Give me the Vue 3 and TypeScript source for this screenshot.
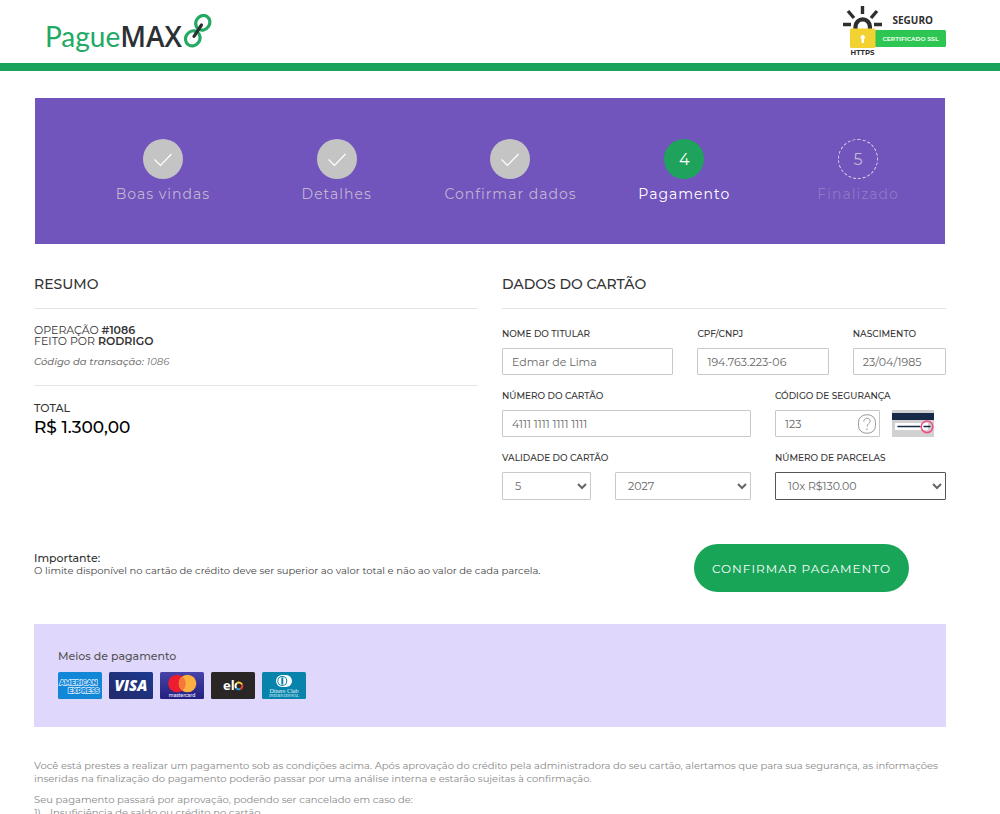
<script setup lang="ts">
import { ref } from 'vue'

type StepState = 'done' | 'active' | 'pending'
interface Step {
  label: string
  state: StepState
}

const steps: Step[] = [
  { label: 'Boas vindas', state: 'done' },
  { label: 'Detalhes', state: 'done' },
  { label: 'Confirmar dados', state: 'done' },
  { label: 'Pagamento', state: 'active' },
  { label: 'Finalizado', state: 'pending' },
]

const holder = ref('Edmar de Lima')
const document = ref('194.763.223-06')
const birth = ref('23/04/1985')
const cardNumber = ref('4111 1111 1111 1111')
const cvv = ref('123')
const month = ref('5')
const year = ref('2027')
const installments = ref('10x R$130.00')
</script>

<template>
  <div class="page">
    <header class="topbar">
      <a class="brand" href="#" aria-label="PagueMAX">
        <span class="brand-light">Pague</span><span class="brand-bold">MAX</span>
        <svg class="brand-link" viewBox="0 0 28 34" width="28" height="34" aria-hidden="true">
          <g fill="none" stroke="#22a963" stroke-width="3.2">
            <ellipse cx="18.8" cy="8.8" rx="6.8" ry="7.6" transform="rotate(35 18.8 8.8)" />
            <ellipse cx="8.8" cy="24.4" rx="7" ry="7.8" transform="rotate(35 8.8 24.4)" />
          </g>
          <path d="M17.5 11 10 22.3" stroke="#2b3034" stroke-width="3.2" stroke-linecap="round" />
        </svg>
      </a>
      <svg class="seal" viewBox="0 0 104 50" width="104" height="50" role="img" aria-label="Seguro, certificado SSL">
        <path d="M20.500 0V8M6 5l6 7M35 5l-6 7M1 18.500h8M32 18.500h8" fill="none" stroke="#2f2f2f" stroke-width="3.400" />
        <path d="M13.500 24v-3.500a7.200 7.200 0 0 1 14.400 0V24" fill="none" stroke="#2f2f2f" stroke-width="4.200" />
        <rect x="31" y="24" width="73" height="17" rx="1.500" fill="#2dc653" />
        <rect x="8" y="22.500" width="25.500" height="19.500" rx="1.500" fill="#f2d233" />
        <path d="M20.800 29a2.300 2.300 0 0 1 1.200 4.200V37h-2.400v-3.800a2.300 2.300 0 0 1 1.200-4.200z" fill="#fff" />
        <text x="50.500" y="18" font-size="10" font-weight="700" fill="#2f2f2f">SEGURO</text>
        <text x="40.500" y="34.500" font-size="6" font-weight="700" fill="#e9fbe9" class="certificate">CERTIFICADO SSL</text>
        <text x="8.500" y="49" font-size="7" font-weight="700" fill="#2f2f2f" class="certificate">HTTPS</text>
      </svg>
    </header>

    <main class="content">
      <ol class="steps">
        <li v-for="(step, i) in steps" :key="step.label" class="step" :class="step.state">
          <span class="bullet">
            <svg v-if="step.state === 'done'" viewBox="0 0 40 40" width="40" height="40" aria-hidden="true">
              <path d="m11.500 20.500 6 6L28.500 15" fill="none" stroke="#fff" stroke-width="1.200" />
            </svg>
            <template v-else>{{ i + 1 }}</template>
          </span>
          <span class="step-label">{{ step.label }}</span>
        </li>
      </ol>

      <div class="columns">
        <section>
          <h2>RESUMO</h2>
          <div class="operation">
            <p class="op-line">OPERAÇÃO <b>#1086</b></p>
            <p class="op-line">FEITO POR <b>RODRIGO</b></p>
            <p class="transaction"><span>Código da transação:</span> 1086</p>
          </div>
          <p class="total-label">TOTAL</p>
          <p class="total">R$ 1.300,00</p>
        </section>

        <form id="card-form" @submit.prevent>
          <h2>DADOS DO CARTÃO</h2>
          <div class="row row-person">
            <div class="field">
              <label for="holder">NOME DO TITULAR</label>
              <input id="holder" v-model="holder" type="text" />
            </div>
            <div class="field">
              <label for="document">CPF/CNPJ</label>
              <input id="document" v-model="document" type="text" />
            </div>
            <div class="field">
              <label for="birth">NASCIMENTO</label>
              <input id="birth" v-model="birth" type="text" />
            </div>
          </div>
          <div class="row row-card">
            <div class="field">
              <label for="number">NÚMERO DO CARTÃO</label>
              <input id="number" v-model="cardNumber" type="text" />
            </div>
            <div class="field">
              <label for="cvv">CÓDIGO DE SEGURANÇA</label>
              <div class="cvv-line">
                <div class="cvv-box">
                  <input id="cvv" v-model="cvv" type="text" />
                  <button class="help" type="button" aria-label="Ajuda">
                    <svg viewBox="0 0 20 20" width="20" height="20" aria-hidden="true">
                      <g fill="none" stroke="#999" stroke-width="1">
                        <rect x="1.500" y="0.800" width="17" height="18.400" rx="7.500" />
                        <path d="M6.800 7.700c0-4.500 6.400-4.500 6.400-.6 0 2.700-3.200 2.500-3.200 5.400" />
                      </g>
                      <circle cx="10" cy="15.300" r=".8" fill="#999" />
                    </svg>
                  </button>
                </div>
                <svg class="cvv-card" viewBox="0 0 42 27" width="42" height="27" aria-hidden="true">
                  <path d="M0 0h42v27H0z" fill="#d1d1d1" />
                  <path d="M0 3h42v7H0z" fill="#172b49" />
                  <path d="M3 13h33v7H3z" fill="#fff" />
                  <path d="M6 16.500h22M32 16.500h6" stroke="#172b49" stroke-width="1.400" stroke-linecap="round" />
                  <circle cx="35" cy="16.800" r="5.800" fill="none" stroke="#f04d83" stroke-width="1.600" />
                </svg>
              </div>
            </div>
          </div>
          <div class="row row-card">
            <fieldset class="field">
              <legend>VALIDADE DO CARTÃO</legend>
              <div class="validity">
                <select v-model="month" aria-label="Mês">
                  <option>5</option>
                </select>
                <select v-model="year" aria-label="Ano">
                  <option>2027</option>
                </select>
              </div>
            </fieldset>
            <div class="field">
              <label for="installments">NÚMERO DE PARCELAS</label>
              <select id="installments" v-model="installments" class="strong">
                <option>10x R$130.00</option>
              </select>
            </div>
          </div>
        </form>
      </div>

      <div class="confirm">
        <div class="notice">
          <strong>Importante:</strong>
          <p>O limite disponível no cartão de crédito deve ser superior ao valor total e não ao valor de cada parcela.</p>
        </div>
        <button class="cta" type="submit" form="card-form">CONFIRMAR PAGAMENTO</button>
      </div>

      <section class="methods">
        <h3>Meios de pagamento</h3>
        <div class="cards">
          <svg viewBox="0 0 44 27" width="44" height="27" role="img" aria-label="American Express">
            <rect width="44" height="27" rx="1.500" fill="#1387d7" />
            <g font-size="6.500" font-weight="800" fill="#1387d7" stroke="#d8edfb" stroke-width="1.400" paint-order="stroke">
              <text x="1.500" y="12.500">AMERICAN</text>
              <text x="10" y="20.500">EXPRESS</text>
            </g>
          </svg>
          <svg viewBox="0 0 44 27" width="44" height="27" role="img" aria-label="Visa">
            <defs>
              <linearGradient id="visa" x1="0" y1="1" x2="1" y2="0">
                <stop offset="0" stop-color="#232a68" />
                <stop offset="1" stop-color="#1c3a90" />
              </linearGradient>
            </defs>
            <rect width="44" height="27" rx="1.500" fill="url(#visa)" />
            <text x="5.500" y="18.500" font-size="15" font-weight="800" font-style="italic" fill="#fff" class="visa">VISA</text>
          </svg>
          <svg viewBox="0 0 44 27" width="44" height="27" role="img" aria-label="Mastercard">
            <defs>
              <linearGradient id="master" x1="0" y1="0" x2="0" y2="1">
                <stop offset="0" stop-color="#4644a8" />
                <stop offset="1" stop-color="#25207f" />
              </linearGradient>
            </defs>
            <rect width="44" height="27" rx="1.500" fill="url(#master)" />
            <circle cx="17" cy="11.500" r="8.800" fill="#ed1c2e" />
            <circle cx="27.500" cy="11.500" r="8.800" fill="#fbb040" />
            <path d="M22.250 4.500a8.800 8.800 0 0 1 0 14 8.800 8.800 0 0 1 0-14z" fill="#f37a38" />
            <text x="22" y="24.500" font-size="4.500" font-weight="600" fill="#e5e4fa" text-anchor="middle">mastercard</text>
          </svg>
          <svg viewBox="0 0 44 27" width="44" height="27" role="img" aria-label="Elo">
            <rect width="44" height="27" rx="1.500" fill="#2b2626" />
            <text x="12" y="17.500" font-size="13" font-weight="700" fill="#fff" class="elo">el</text>
            <g fill="none" stroke-width="2">
              <path d="M25.300 16.200a3.400 3.400 0 0 1 .6-5" stroke="#fff" />
              <path d="M25.900 11.200a3.400 3.400 0 0 1 5.200 1.400" stroke="#f5d23b" />
              <path d="M31.100 12.600a3.400 3.400 0 0 1-2 4.400" stroke="#e8443a" />
              <path d="M29.100 17a3.400 3.400 0 0 1-3.800-.8" stroke="#2aa5de" />
            </g>
          </svg>
          <svg viewBox="0 0 44 27" width="44" height="27" role="img" aria-label="Diners Club International">
            <rect width="44" height="27" rx="1.500" fill="#0783ac" />
            <path d="M20 3h4a6 6 0 0 1 0 12h-4a6 6 0 0 1 0-12z" fill="#fff" />
            <circle cx="20.300" cy="9" r="5" fill="#0783ac" />
            <circle cx="20.300" cy="9" r="4" fill="#fff" />
            <path d="M20.300 5.500v7" stroke="#0783ac" stroke-width="2" />
            <text x="22" y="20.500" font-size="6" fill="#e1f4fa" text-anchor="middle" class="diners">Diners Club</text>
            <text x="22" y="24.500" font-size="3.500" font-weight="700" fill="#bce3ef" text-anchor="middle" class="diners">INTERNATIONAL</text>
          </svg>
        </div>
      </section>

      <section class="terms">
        <p>
          Você está prestes a realizar um pagamento sob as condições acima. Após aprovação do crédito pela
          administradora do seu cartão, alertamos que para sua segurança, as informações inseridas na finalização do
          pagamento poderão passar por uma análise interna e estarão sujeitas à confirmação.
        </p>
        <p class="reasons">Seu pagamento passará por aprovação, podendo ser cancelado em caso de:</p>
        <ol>
          <li><span>1)</span>Insuficiência de saldo ou crédito no cartão</li>
        </ol>
      </section>
    </main>
  </div>
</template>

<style>
body {
  margin: 0;
  background: #fff;
}
</style>

<style scoped>
.page,
.page input,
.page select,
.page button {
  font-family: Montserrat, Inter, "Liberation Sans", sans-serif;
}
.page {
  color: #333;
}
.page * {
  box-sizing: border-box;
}
h2,
h3,
p,
ol {
  margin: 0;
  padding: 0;
  list-style: none;
}
.topbar {
  display: flex;
  justify-content: space-between;
  align-items: flex-start;
  height: 71px;
  padding: 6px 54px 0 45px;
  border-bottom: 8px solid #1ca35b;
}
.brand {
  display: flex;
  align-items: flex-start;
  padding-top: 8px;
  font-size: 28px;
  line-height: 44px;
  text-decoration: none;
}
.brand-light {
  font-family: Lato, sans-serif;
  color: #22a963;
}
.brand-bold {
  font-family: "Open Sans", sans-serif;
  font-weight: 600;
  color: #2b3034;
}
.brand-link {
  margin-left: 2px;
}
.seal text {
  font-family: "Open Sans", sans-serif;
}
.seal .certificate {
  font-family: Montserrat, "Open Sans", sans-serif;
}
.content {
  padding: 27px 54px 0 34px;
}
.steps {
  display: grid;
  grid-template-columns: repeat(5, 1fr);
  height: 146px;
  margin: 0 1px;
  padding: 41px 0 0 41px;
  background: #7154bc;
}
.step {
  display: flex;
  flex-direction: column;
  align-items: center;
  gap: 5px;
  color: #c0b6d2;
}
.bullet {
  display: flex;
  align-items: center;
  justify-content: center;
  width: 40px;
  height: 40px;
  border-radius: 50%;
  background: #c4c4c4;
  font-size: 16px;
}
.step-label {
  font-size: 14px;
  line-height: 20px;
  letter-spacing: 1px;
  white-space: nowrap;
}
.active {
  color: #fff;
}
.active .bullet {
  background: #1fa35c;
}
.pending {
  color: #8f78c4;
}
.pending .bullet {
  background: none;
  border: 1px dashed #ddd6ea;
  color: #c4b9d6;
}
.columns {
  display: grid;
  grid-template-columns: 1fr 1fr;
  gap: 24px;
  padding-top: 30px;
}
h2 {
  height: 35px;
  border-bottom: 1px solid #e5e5e5;
  font-size: 14px;
  font-weight: 500;
  line-height: 20px;
}
.operation {
  padding: 16px 0 16px;
  border-bottom: 1px solid #e5e5e5;
}
.op-line {
  font-size: 11px;
  line-height: 11px;
}
.op-line b {
  font-weight: 600;
}
.transaction {
  padding-top: 7px;
  font-size: 10px;
  line-height: 15px;
  font-style: italic;
  color: #777;
}
.transaction span {
  font-weight: 500;
}
.total-label {
  padding-top: 14px;
  font-size: 11px;
  font-weight: 500;
  line-height: 16px;
}
.total {
  font-size: 17px;
  font-weight: 500;
  line-height: 22px;
  color: #000;
}
.row {
  display: grid;
  gap: 24px;
  padding-top: 18px;
}
.row + .row {
  padding-top: 14px;
}
.row-person {
  grid-template-columns: 171fr 131fr 93fr;
}
.row-card {
  grid-template-columns: 249fr 171fr;
}
.field {
  min-width: 0;
  margin: 0;
  padding: 0;
  border: 0;
}
label,
legend {
  display: block;
  height: 21px;
  padding: 0;
  font-size: 9px;
  font-weight: 500;
  line-height: 14px;
  white-space: nowrap;
}
input,
select {
  display: block;
  width: 100%;
  height: 27px;
  border: 1px solid #c9c9c9;
  border-radius: 1px;
  background: #fff;
  color: #666;
  font-size: 11px;
  outline: none;
}
input {
  padding: 0 9px;
}
select {
  height: 28px;
  padding: 0 0 0 8px;
}
select.strong {
  border-color: #555;
}
.cvv-line {
  display: flex;
  gap: 12px;
}
.cvv-box {
  position: relative;
  flex: 0 0 105px;
}
.help {
  position: absolute;
  top: 4px;
  right: 3px;
  width: 20px;
  height: 20px;
  padding: 0;
  border: 0;
  background: none;
}
.validity {
  display: grid;
  grid-template-columns: 89fr 136fr;
  gap: 24px;
}
.confirm {
  display: flex;
  justify-content: space-between;
  align-items: flex-start;
  padding: 44px 37px 0 0;
}
.notice {
  padding-top: 7px;
  font-size: 10px;
  line-height: 12px;
  color: #444;
}
.notice strong {
  display: block;
  font-size: 11px;
  font-weight: 500;
  line-height: 14px;
  color: #333;
}
.cta {
  width: 215px;
  height: 48px;
  padding: 0;
  border: 0;
  border-radius: 24px;
  background: #18a558;
  color: #fff;
  font-size: 12px;
  letter-spacing: 1px;
  white-space: nowrap;
}
.methods {
  margin-top: 32px;
  padding: 24px 24px 28px;
  background: #e0d7fc;
}
h3 {
  font-size: 11px;
  font-weight: 500;
  line-height: 16px;
  color: #555;
}
.cards {
  display: flex;
  gap: 7px;
  padding-top: 8px;
}
.cards svg {
  display: block;
}
.visa,
.elo {
  font-family: "Open Sans", sans-serif;
}
.diners {
  font-family: "Liberation Serif", serif;
}
.terms {
  padding-top: 32px;
  font-size: 10px;
  line-height: 13px;
  color: #888;
}
.reasons {
  padding-top: 8px;
}
.terms li {
  display: flex;
}
.terms li span {
  width: 16px;
}
</style>
